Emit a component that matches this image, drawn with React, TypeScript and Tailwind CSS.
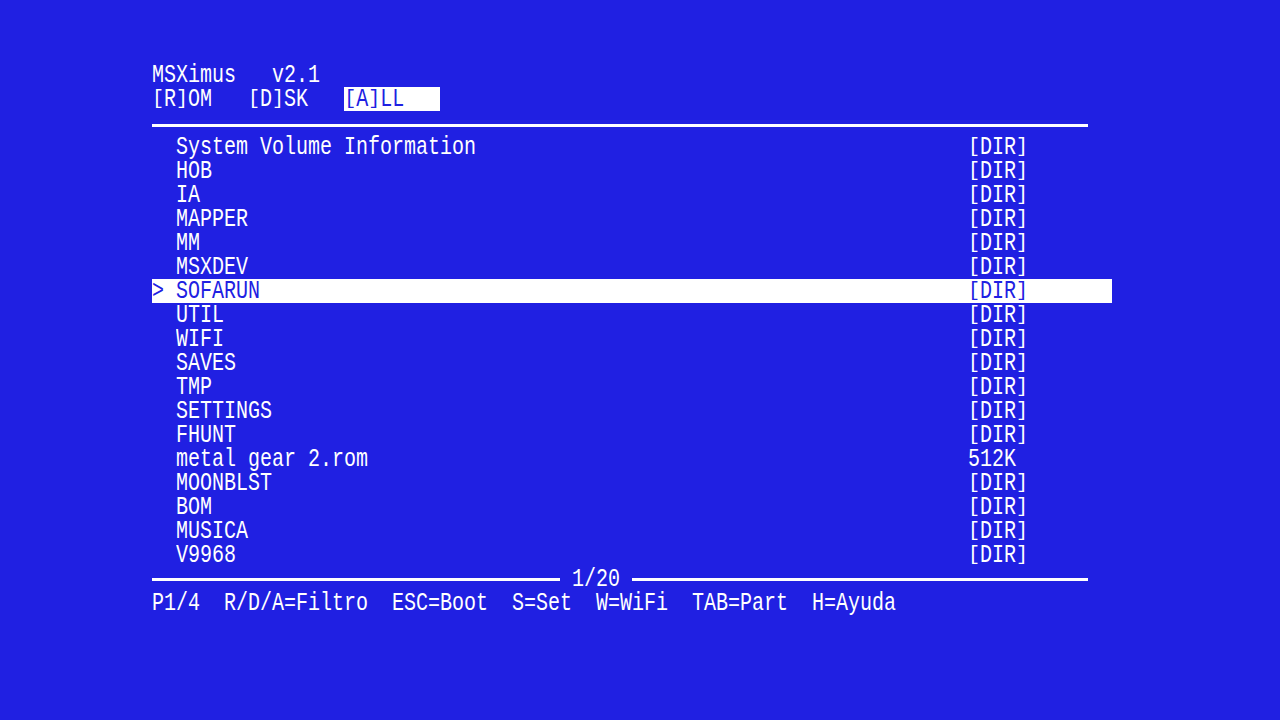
const files: [string, string][] = [
  ["System Volume Information", "[DIR]"],
  ["HOB", "[DIR]"],
  ["IA", "[DIR]"],
  ["MAPPER", "[DIR]"],
  ["MM", "[DIR]"],
  ["MSXDEV", "[DIR]"],
  ["SOFARUN", "[DIR]"],
  ["UTIL", "[DIR]"],
  ["WIFI", "[DIR]"],
  ["SAVES", "[DIR]"],
  ["TMP", "[DIR]"],
  ["SETTINGS", "[DIR]"],
  ["FHUNT", "[DIR]"],
  ["metal gear 2.rom", "512K"],
  ["MOONBLST", "[DIR]"],
  ["BOM", "[DIR]"],
  ["MUSICA", "[DIR]"],
  ["V9968", "[DIR]"],
]

const selected = 6

// glyphs on the MSX screen are tall and narrow, so stretch each text cell
const cell = "mt-[1px] h-[18px] leading-[18px] whitespace-pre origin-top scale-y-[1.25]"

// MSX brackets are only cap height, so squash them back down
function Msx({ text }: { text: string }) {
  return (
    <>
      {text.split(/([\[\]])/).map((part, i) =>
        part === "[" || part === "]" ? (
          <span key={i} className="inline-block origin-[50%_9px] scale-y-[0.82]">
            {part}
          </span>
        ) : (
          part
        )
      )}
    </>
  )
}

export default function App() {
  return (
    <div className="h-[720px] w-[1280px] overflow-hidden bg-[#2020e2] pt-[63px] pl-[152px] font-['Liberation_Mono',monospace] text-[20px] leading-[24px] text-white">
      <div className="flex flex-col w-[960px]">
        <div className="flex h-[24px] items-start">
          <div className={cell}>{"MSXimus   v2.1"}</div>
        </div>
        <div className="flex h-[24px] items-start">
          <div className={cell}>
            <Msx text={"[R]OM   [D]SK   "} />
          </div>
          <div className="h-[24px] bg-white text-[#2020e2]">
            <div className={cell}>
              <Msx text={"[A]LL   "} />
            </div>
          </div>
        </div>
        <div className="h-[24px] pt-[13px]">
          <div className="h-[3px] w-[936px] bg-white" />
        </div>

        {files.map(([name, kind], i) => (
          <div
            key={name}
            className={`flex h-[24px] items-start ${i === selected ? "bg-white text-[#2020e2]" : ""}`}
          >
            <div className={`${cell} w-[24px]`}>{i === selected ? ">" : " "}</div>
            <div className={`${cell} w-[792px]`}>{name}</div>
            <div className={`${cell} w-[144px]`}>
              <Msx text={kind} />
            </div>
          </div>
        ))}

        <div className="flex h-[24px] items-start">
          <div className="mt-[11px] h-[3px] w-[408px] bg-white" />
          <div className={`${cell} ml-[12px] w-[48px]`}>1/20</div>
          <div className="mt-[11px] ml-[12px] h-[3px] w-[456px] bg-white" />
        </div>
        <div className="flex h-[24px] items-start">
          <div className={cell}>
            {"P1/4  R/D/A=Filtro  ESC=Boot  S=Set  W=WiFi  TAB=Part  H=Ayuda"}
          </div>
        </div>
      </div>
    </div>
  )
}
